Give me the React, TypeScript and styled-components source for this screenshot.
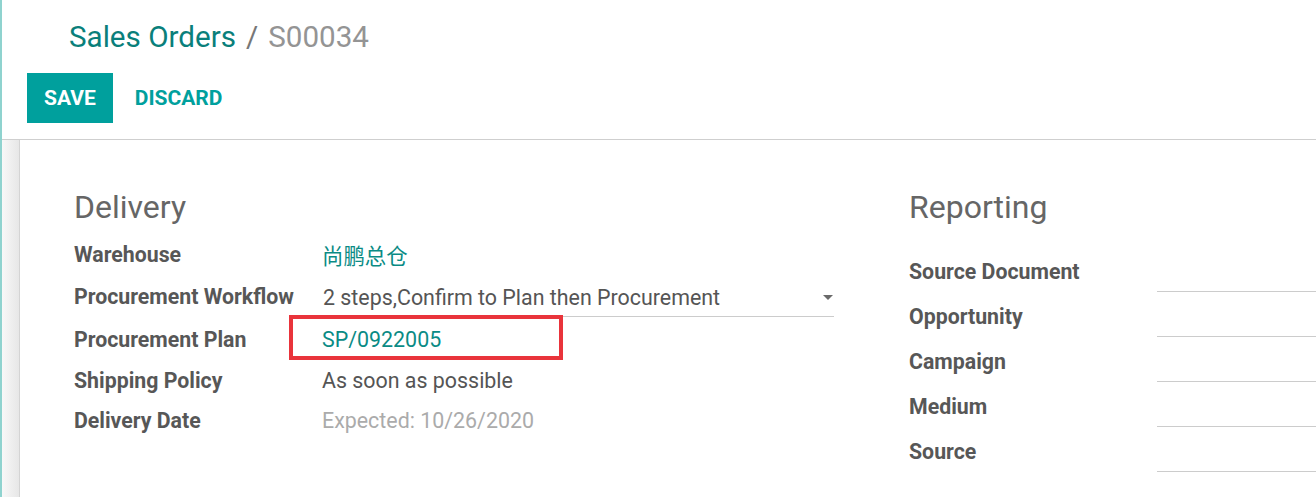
import React from "react";
import styled, { createGlobalStyle } from "styled-components";

const GlobalStyle = createGlobalStyle`
  html, body {
    margin: 0;
    padding: 0;
    background: #ffffff;
  }
  body {
    font-family: Roboto, "Noto Sans", "Noto Sans CJK SC", sans-serif;
    color: #4c4c4c;
    overflow: hidden;
  }
`;

const Page = styled.div`
  width: 1316px;
  height: 497px;
  border-left: 2px solid #8fd3cf;
  box-sizing: border-box;
  display: flex;
  flex-direction: column;
  overflow: hidden;
`;

const ControlPanel = styled.div`
  height: 140px;
  box-sizing: border-box;
  border-bottom: 1px solid #cfcfcf;
  padding: 17px 0 0 25px;
  display: flex;
  flex-direction: column;
`;

const Breadcrumb = styled.div`
  display: flex;
  align-items: center;
  gap: 10px;
  height: 40px;
  padding-left: 42px;
  font-size: 29.6px;
`;

const CrumbLink = styled.span`
  color: #0a7f7b;
`;

const CrumbSep = styled.span`
  color: #777777;
`;

const CrumbActive = styled.span`
  color: #949494;
`;

const Buttons = styled.div`
  display: flex;
  align-items: center;
  margin-top: 16px;
`;

const Button = styled.button<{ $primary?: boolean }>`
  height: 50px;
  padding: 0 ${(p) => (p.$primary ? "17px" : "22px")};
  border: none;
  border-radius: 0;
  font-family: Roboto, sans-serif;
  font-weight: 700;
  font-size: 21px;
  text-transform: uppercase;
  cursor: pointer;
  background: ${(p) => (p.$primary ? "#00a09d" : "transparent")};
  color: ${(p) => (p.$primary ? "#ffffff" : "#00a09d")};
`;

const Content = styled.div`
  flex: 1;
  display: flex;
  min-height: 0;
`;

const Gutter = styled.div`
  width: 17px;
  background: linear-gradient(to right, #f8f8f8, #e7e7e7);
  border-right: 1px solid #d4d4d4;
`;

const Sheet = styled.div`
  flex: 1;
  background: #ffffff;
  padding: 49px 0 0 54px;
  display: grid;
  grid-template-columns: 760px 1fr;
  column-gap: 75px;
  align-items: start;
`;

const Group = styled.div`
  display: flex;
  flex-direction: column;
`;

const GroupTitle = styled.div<{ $gap: number }>`
  font-size: 32px;
  line-height: 36px;
  color: #666666;
  margin-bottom: ${(p) => p.$gap}px;
`;

const Row = styled.div<{ $h: number }>`
  display: grid;
  grid-template-columns: 248px 1fr;
  align-items: center;
  height: ${(p) => p.$h}px;
`;

const Label = styled.div`
  font-weight: 700;
  font-size: 21.3px;
  color: #575757;
  white-space: nowrap;
`;

const Value = styled.div<{ $tone?: "link" | "muted" }>`
  position: relative;
  font-size: 21.4px;
  white-space: nowrap;
  color: ${(p) =>
    p.$tone === "link" ? "#0a8b85" : p.$tone === "muted" ? "#ababab" : "#555555"};
`;

const Select = styled.div`
  display: flex;
  align-items: center;
  justify-content: space-between;
  height: 36px;
  margin-top: 4px;
  padding-left: 1px;
  border-bottom: 1px solid #cccccc;
  font-size: 21.4px;
  color: #555555;
`;

const Caret = styled.span`
  width: 0;
  height: 0;
  margin-right: 1px;
  border-left: 5px solid transparent;
  border-right: 5px solid transparent;
  border-top: 5px solid #6a6a6a;
`;

const Highlight = styled.div`
  position: absolute;
  left: -33px;
  top: -12px;
  width: 274px;
  height: 45px;
  box-sizing: border-box;
  border: 4px solid #e9343b;
  pointer-events: none;
`;

const EmptyInput = styled.div`
  align-self: end;
  height: 30px;
  margin-bottom: 2px;
  border-bottom: 1px solid #cccccc;
`;

const reportingFields = ["Source Document", "Opportunity", "Campaign", "Medium", "Source"];

export default function App() {
  return (
    <>
      <GlobalStyle />
      <Page>
        <ControlPanel>
          <Breadcrumb>
            <CrumbLink>Sales Orders</CrumbLink>
            <CrumbSep>/</CrumbSep>
            <CrumbActive>S00034</CrumbActive>
          </Breadcrumb>
          <Buttons>
            <Button $primary>Save</Button>
            <Button>Discard</Button>
          </Buttons>
        </ControlPanel>
        <Content>
          <Gutter />
          <Sheet>
            <Group>
              <GroupTitle $gap={9}>Delivery</GroupTitle>
              <Row $h={40}>
                <Label>Warehouse</Label>
                <Value $tone="link">尚鹏总仓</Value>
              </Row>
              <Row $h={44}>
                <Label>Procurement Workflow</Label>
                <Select>
                  <span>2 steps,Confirm to Plan then Procurement</span>
                  <Caret />
                </Select>
              </Row>
              <Row $h={42}>
                <Label>Procurement Plan</Label>
                <Value $tone="link">
                  SP/0922005
                  <Highlight />
                </Value>
              </Row>
              <Row $h={40}>
                <Label>Shipping Policy</Label>
                <Value>As soon as possible</Value>
              </Row>
              <Row $h={40}>
                <Label>Delivery Date</Label>
                <Value $tone="muted">Expected: 10/26/2020</Value>
              </Row>
            </Group>
            <Group>
              <GroupTitle $gap={24}>Reporting</GroupTitle>
              {reportingFields.map((f) => (
                <Row key={f} $h={45}>
                  <Label>{f}</Label>
                  <EmptyInput />
                </Row>
              ))}
            </Group>
          </Sheet>
        </Content>
      </Page>
    </>
  );
}
